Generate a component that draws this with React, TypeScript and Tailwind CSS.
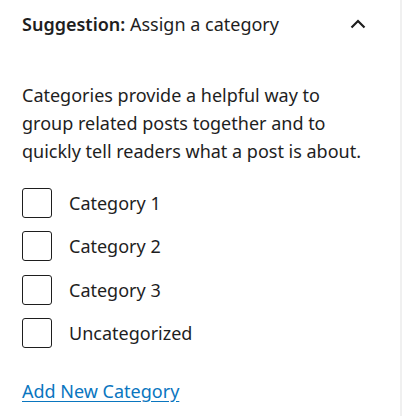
import React from "react";

const cats = ["Category 1", "Category 2", "Category 3", "Uncategorized"];

export default function App() {
  return (
    <div
      className="w-[402px] h-[416px] bg-white flex text-[#1e1e1e] overflow-hidden"
      style={{ fontFamily: '"Noto Sans", "Open Sans", sans-serif' }}
    >
      <div className="w-[400px] shrink-0 flex flex-col">
        <div className="h-[48px] flex items-center justify-between pl-[22px] pr-[34px]">
          <div className="text-[18px] leading-[28px]">
            <span className="font-semibold">Suggestion:</span> Assign a category
          </div>
          <svg width="16" height="10" viewBox="0 0 16 10" fill="none">
            <path d="M1.5 8.5 L8 2 L14.5 8.5" stroke="#1e1e1e" strokeWidth="2.2" />
          </svg>
        </div>
        <div className="pl-[22px] pr-[28px] pt-[33px]">
          <p className="text-[18px] leading-[28px]">
            Categories provide a helpful way to group related posts together and to quickly tell readers what a post is about.
          </p>
          <div className="mt-[23px] flex flex-col gap-[13.33px]">
            {cats.map((c) => (
              <label key={c} className="flex items-center gap-[17px]">
                <span className="w-[30px] h-[30px] rounded-[3px] border-[1.5px] border-[#1e1e1e] box-border" />
                <span className="text-[18px] leading-[28px]">{c}</span>
              </label>
            ))}
          </div>
          <a
            href="#"
            className="block mt-[29px] text-[18px] leading-[28px] text-[#0a76bf] underline underline-offset-[3px] w-fit"
          >
            Add New Category
          </a>
        </div>
      </div>
      <div className="w-[2px] bg-[#f0f0f0]" />
    </div>
  );
}
